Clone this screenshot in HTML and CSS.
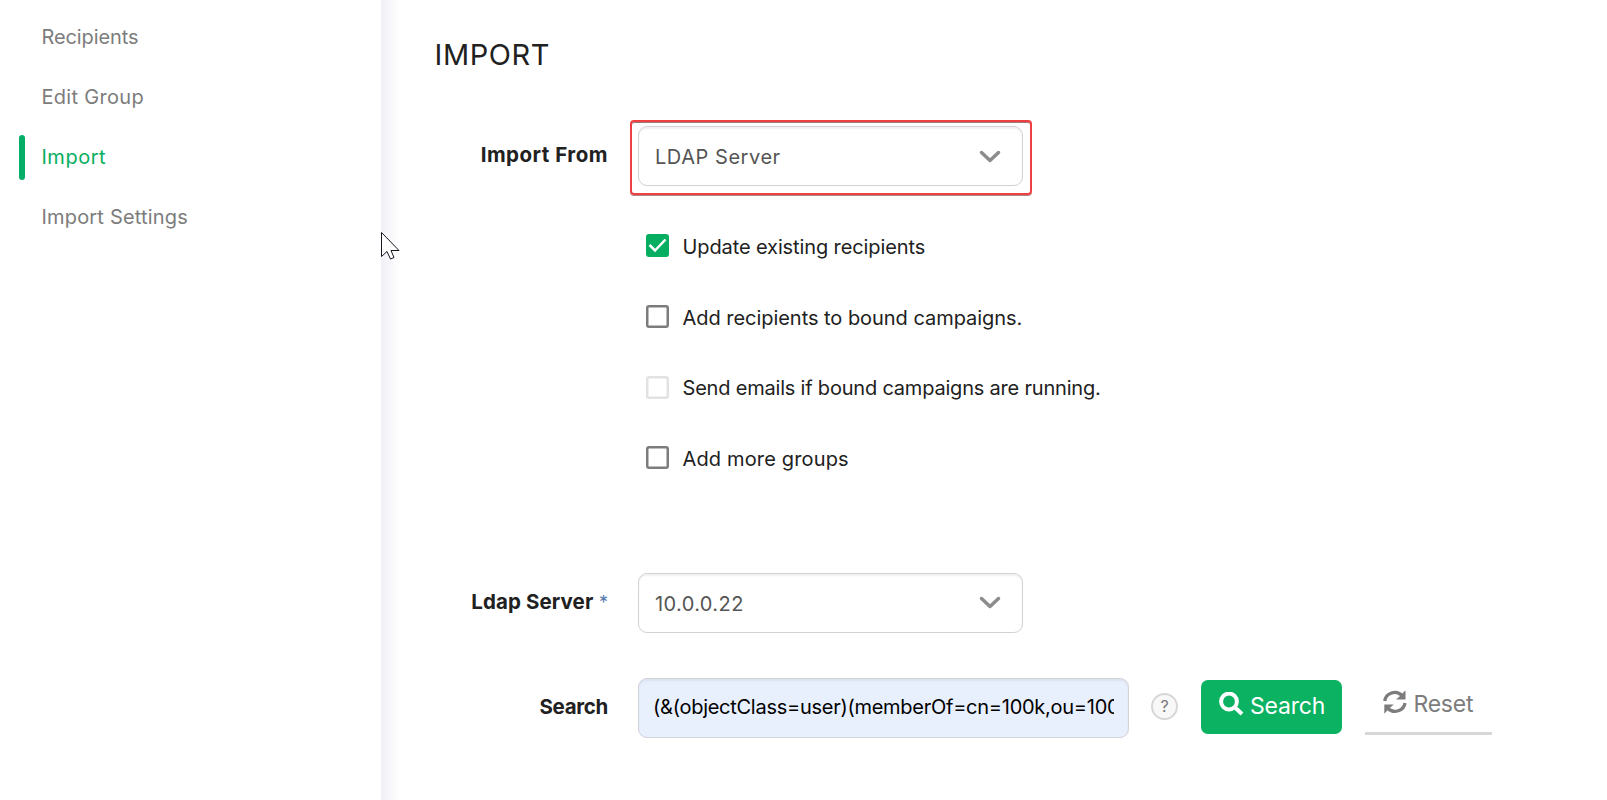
FILE: index.html
```html
<!DOCTYPE html>
<html lang="en">
<head>
<meta charset="utf-8">
<title>Import</title>
<link rel="stylesheet" href="styles.css">
</head>
<body>
<div class="page">
  <nav class="sidebar">
    <a class="nav-item nav-recipients">Recipients</a>
    <a class="nav-item nav-edit">Edit Group</a>
    <a class="nav-item nav-import active">Import</a>
    <a class="nav-item nav-settings">Import Settings</a>
  </nav>
  <main class="content">
    <h1 class="title"><span>IMPORT</span></h1>
    <div class="row row-from">
      <label class="label label-from"><span>Import From</span></label>
      <div class="highlight">
        <div class="select"><span class="value-ldap">LDAP Server</span>
          <svg class="chevron" viewBox="0 0 22 14"><path d="M2.5 2.5 11 10.5 19.5 2.5"/></svg></div>
      </div>
    </div>
    <div class="checks">
      <label class="check"><span class="box checked"><svg viewBox="0 0 23 23"><path d="M3.5 11 9 16.5 19.5 5.500"/></svg></span><span class="t-update">Update existing recipients</span></label>
      <label class="check"><span class="box"></span><span class="t-add">Add recipients to bound campaigns.</span></label>
      <label class="check"><span class="box disabled"></span><span class="t-send">Send emails if bound campaigns are running.</span></label>
      <label class="check"><span class="box"></span><span class="t-groups">Add more groups</span></label>
    </div>
    <div class="row row-server">
      <label class="label label-server"><span>Ldap Server</span><span class="required">*</span></label>
      <div class="select"><span class="value-ip">10.0.0.22</span>
        <svg class="chevron" viewBox="0 0 22 14"><path d="M2.5 2.5 11 10.5 19.5 2.5"/></svg></div>
    </div>
    <div class="row row-search">
      <label class="label label-search"><span>Search</span></label>
      <input class="input" type="text" value="(&amp;(objectClass=user)(memberOf=cn=100k,ou=100k">
      <span class="help">?</span>
      <button class="btn-search"><svg class="icon-search" viewBox="0 0 25 24"><circle cx="10" cy="9.5" r="7.9"/><path d="M15.5 15 23 22"/></svg><span>Search</span></button>
      <button class="btn-reset"><svg class="icon-reset" viewBox="0 0 24 24"><path class="arc" d="M1.800 11A10 9.500 0 0 1 19 5.500M22 13A10 9.500 0 0 1 5 18.500"/><path class="head" d="M22.500 .3V9.500H13L16.500 6.500ZM1.300 23.700V14.500H10.800L7.300 17.500Z"/></svg><span>Reset</span></button>
    </div>
  </main>
</div>
<svg class="cursor" viewBox="0 0 19 28"><path d="M.5.5V24.500L6 19.500 9.500 27 13 25.500 10 18.500H18Z"/></svg>
</body>
</html>
```
FILE: styles.css
```css
* { box-sizing: border-box; }
body { margin: 0; background: #fff; overflow: hidden; font-family: Inter, "Liberation Sans", sans-serif; font-size: 20px; color: #212121; }
.page { display: flex; height: 800px; }
.sidebar { width: 381px; flex: none; padding: 7px 0 0 19px; display: flex; flex-direction: column; }
.nav-item { height: 60px; line-height: 60px; padding-left: 22.500px; color: #7c7c7c; display: flex; align-items: center; }
.nav-recipients { letter-spacing: -.1px; }
.nav-edit { letter-spacing: .3px; }
.nav-import { letter-spacing: .5px; }
.nav-settings { letter-spacing: .18px; }
.nav-item.active { color: #08ae60; padding-left: 0; }
.nav-item.active::before { content: ""; width: 6px; height: 45px; border-radius: 3px; background: #05ae67; margin: 1px 16.500px 0 0; }
.content { flex: 1; background: linear-gradient(90deg, #f0f0f8 0, #f6f6fb 8px, #fdfdfe 15px, #fff 20px); }
.title { margin: 0; padding: 34px 0 0 53.500px; font-weight: 400; font-size: 29px; line-height: 42px; letter-spacing: .6px; }
.row { display: flex; align-items: center; height: 60px; }
.row-from { margin-top: 44px; height: 75px; }
.label { width: 227px; margin-right: 30px; text-align: right; font-weight: 700; font-size: 20.500px; flex: none; line-height: 24px; padding-bottom: 1px; }
.label-from { padding-bottom: 5px; letter-spacing: .5px; }
.label-server { letter-spacing: .1px; }
.label-search { letter-spacing: -.3px; }
.required { color: #5577aa; font-weight: 400; font-size: 18px; margin-left: 5.500px; }
.highlight { width: 402px; height: 75px; margin-left: -8px; padding: 4px 6px; border: 2px solid #ee4040; border-radius: 4px; box-shadow: inset 0 1px 0 #9b7777, 0 1px 0 #aa8888; }
.select { width: 385px; height: 60px; border: 1px solid #d2d2d2; border-radius: 9px; padding: 2px 21px 0 16px; display: flex; align-items: center; justify-content: space-between; color: #555; background: #fff; box-shadow: inset 0 2px 2px #f1f1f1; }
.value-ldap { letter-spacing: .55px; }
.value-ip { letter-spacing: .4px; }
.chevron { width: 22px; height: 14px; fill: none; stroke: #8c8c8c; stroke-width: 3.500; stroke-linecap: round; stroke-linejoin: round; margin-bottom: 1px; }
.checks { padding: 16px 0 0 265px; }
.check { height: 70.700px; display: flex; align-items: center; gap: 13.500px; }
.check span + span { padding-top: 1px; }
.t-update { letter-spacing: -.11px; }
.t-add { letter-spacing: -.04px; }
.t-send { letter-spacing: -.2px; }
.t-groups { letter-spacing: .15px; }
.box { width: 23px; height: 23px; box-shadow: inset 0 0 0 2.500px #7c7c7c; border-radius: 3px; flex: none; margin-bottom: 1px; }
.box.disabled { box-shadow: inset 0 0 0 2.500px #e2e2e2; }
.box.checked { box-shadow: none; background: #05ae60; }
.box svg { display: block; width: 23px; height: 23px; fill: none; stroke: #fff; stroke-width: 2.500; }
.row-server { margin-top: 79px; }
.row-search { margin-top: 45px; }
.input { width: 491px; height: 60px; border: 1px solid #d2d2d8; border-radius: 9px; background: #e8effd; padding: 0 14px 2px; font: inherit; letter-spacing: -.27px; color: #000; box-shadow: inset 0 2px 2px #dce3ef; flex: none; }
.help { width: 27px; height: 27px; border: 2px solid #d7d7d7; border-radius: 50%; background: #f8f8f8; margin: 0 0 2px 22px; color: #777; font-size: 16px; line-height: 23px; text-align: center; flex: none; }
button { font: inherit; border: 0; padding: 0; display: flex; align-items: center; flex: none; }
.btn-search { width: 141px; height: 54px; border-radius: 7px; background: #0bb261; color: #fff; margin: 0 0 2px 23px; padding: 0 0 2px 18px; font-size: 23px; letter-spacing: -.2px; }
.icon-search { width: 25px; height: 24px; fill: none; stroke: #fff; stroke-width: 4; margin: 0 6px 4px 0; }
.btn-reset { width: 127px; height: 54px; margin-left: 23px; background: transparent; color: #7c7c7c; border-bottom: 3px solid #d7d7d7; padding: 0 0 4px 18px; font-size: 23px; letter-spacing: -.25px; }
.icon-reset { width: 24px; height: 24px; margin: 0 6.500px 4px 0; }
.arc { fill: none; stroke: #7c7c7c; stroke-width: 3.300; }
.head { fill: #7c7c7c; }
.cursor { position: absolute; left: 381px; top: 232px; width: 19px; height: 28px; fill: #fff; stroke: #15151f; stroke-width: 1; }
```
